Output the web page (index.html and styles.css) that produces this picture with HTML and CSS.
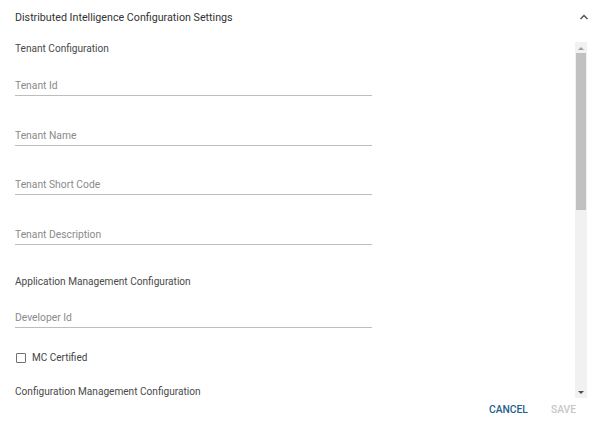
FILE: index.html
```html
<!DOCTYPE html>
<html>
<head>
<meta charset="utf-8">
<link rel="stylesheet" href="styles.css">
</head>
<body>
<div class="panel">
  <div class="header">
    <span class="title">Distributed Intelligence Configuration Settings</span>
    <svg class="chevron" width="10" height="8" viewBox="0 0 10 8"><path d="M1.5 6 L5 2.5 L8.5 6" fill="none" stroke="#555" stroke-width="1.5"/></svg>
  </div>
  <div class="body">
    <div class="form">
      <div class="section s-first">Tenant Configuration</div>
      <div class="field f-first"><span class="label">Tenant Id</span></div>
      <div class="field"><span class="label">Tenant Name</span></div>
      <div class="field"><span class="label">Tenant Short Code</span></div>
      <div class="field"><span class="label">Tenant Description</span></div>
      <div class="section s-app">Application Management Configuration</div>
      <div class="field f-dev"><span class="label">Developer Id</span></div>
      <label class="check"><span class="box"></span><span>MC Certified</span></label>
      <div class="section s-cfg">Configuration Management Configuration</div>
    </div>
    <div class="scrollbar">
      <div class="sb-btn"><svg width="6" height="4" viewBox="0 0 6 4"><path d="M0 4 L3 1 L6 4Z" fill="#a0a0a0"/></svg></div>
      <div class="sb-thumb"></div>
      <div class="sb-track"></div>
      <div class="sb-btn"><svg width="6" height="4" viewBox="0 0 6 4"><path d="M0 0 L3 3 L6 0Z" fill="#505050"/></svg></div>
    </div>
  </div>
  <div class="footer">
    <button class="btn cancel">Cancel</button>
    <button class="btn save">Save</button>
  </div>
</div>
</body>
</html>
```
FILE: styles.css
```css
* { box-sizing: border-box; }
html, body { margin: 0; padding: 0; background: #fff; }
body { font-family: Roboto, "Liberation Sans", sans-serif; width: 600px; height: 423px; overflow: hidden; }
.panel { width: 600px; height: 423px; display: flex; flex-direction: column; }
.header { height: 40px; display: flex; align-items: flex-start; justify-content: space-between; padding: 10px 11px 0 15px; }
.title { font-size: 10.7px; line-height: 16px; color: #333; }
.chevron { margin-top: 3px; }
.body { height: 358px; display: flex; padding-right: 13px; }
.form { flex: 1; overflow: hidden; padding-left: 15px; padding-top: 1px; }
.section { font-size: 10.1px; line-height: 16px; color: #4a4a4a; }
.s-first { margin-top: 0; }
.field { width: 357px; border-bottom: 1px solid #bdbdbd; padding-bottom: 1px; margin-top: 31.5px; }
.f-first { margin-top: 21px; }
.label { display: block; font-size: 10.3px; line-height: 16px; color: #8a8a8a; }
.s-app { margin-top: 29px; }
.f-dev { margin-top: 20px; }
.check { display: flex; align-items: center; gap: 6px; margin-top: 22px; height: 16px; font-size: 10px; color: #444; }
.box { width: 10px; height: 10px; border: 1.5px solid #707070; border-radius: 1px; margin-left: 1px; }
.s-cfg { margin-top: 18px; white-space: nowrap; }
.scrollbar { width: 12px; margin-top: 2px; background: #f1f1f1; display: flex; flex-direction: column; }
.sb-btn { height: 11px; display: flex; align-items: center; justify-content: center; }
.sb-thumb { height: 157px; background: #c1c1c1; margin: 0 1px; }
.sb-track { flex: 1; }
.footer { flex: 1; display: flex; justify-content: flex-end; align-items: flex-start; padding: 4px 24px 0 0; gap: 0; }
.btn { background: none; border: 0; padding: 0; font-family: Roboto, "Liberation Sans", sans-serif; font-size: 10.3px; line-height: 16px; font-weight: 500; text-transform: uppercase; }
.cancel { color: #215f8c; margin-right: 23px; }
.save { color: #c8c8c8; }
```
